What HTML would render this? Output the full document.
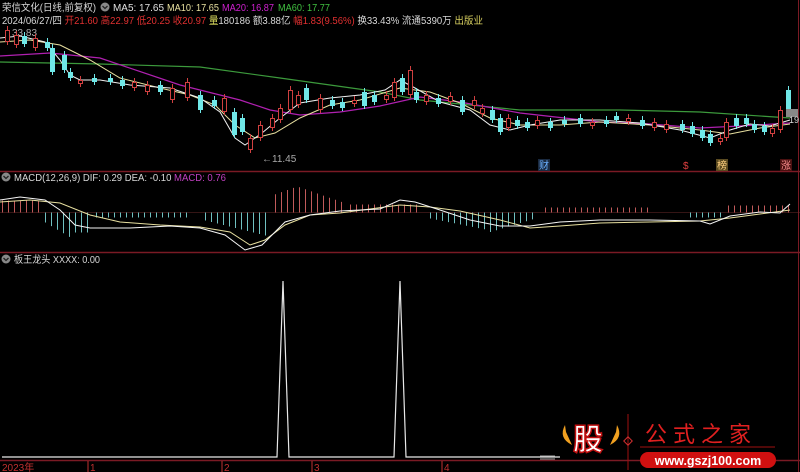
<!DOCTYPE html>
<html><head><meta charset="utf-8">
<style>
html,body{margin:0;padding:0;background:#000;width:800px;height:472px;overflow:hidden}
svg{display:block}
text{font-family:"Liberation Sans","Noto Sans CJK SC",sans-serif}
</style></head><body>
<svg id="s" width="800" height="472" viewBox="0 0 800 472" xmlns="http://www.w3.org/2000/svg">
<rect width="800" height="472" fill="#000"/>
<!-- header -->
<text x="2" y="11" font-size="10" fill="#d8d8d8" textLength="94" lengthAdjust="spacingAndGlyphs">荣信文化(日线,前复权)</text>
<circle cx="105" cy="7" r="4.5" fill="#888"/><path d="M102.5 6 L105 8.5 L107.5 6" stroke="#222" stroke-width="1.3" fill="none"/>
<text x="113" y="11" font-size="10" fill="#e0e0e0" textLength="51" lengthAdjust="spacingAndGlyphs">MA5: 17.65</text>
<text x="167" y="11" font-size="10" fill="#e8e0a0" textLength="52" lengthAdjust="spacingAndGlyphs">MA10: 17.65</text>
<text x="222" y="11" font-size="10" fill="#d020d0" textLength="52" lengthAdjust="spacingAndGlyphs">MA20: 16.87</text>
<text x="278" y="11" font-size="10" fill="#40c040" textLength="52" lengthAdjust="spacingAndGlyphs">MA60: 17.77</text>
<text x="2" y="24" font-size="10" fill="#d8d8d8" textLength="481" lengthAdjust="spacingAndGlyphs">2024/06/27/四 <tspan fill="#e03030">开21.60 高22.97 低20.25 收20.97</tspan> <tspan fill="#e0e060">量</tspan>180186 额3.88亿 <tspan fill="#e03030">幅1.83(9.56%)</tspan> 换33.43% 流通5390万 <tspan fill="#d8d060">出版业</tspan></text>
<text x="12" y="36" font-size="10" fill="#aaa">33.83</text>
<text x="262" y="162" font-size="10" fill="#aaa">←11.45</text>
<!-- separators -->
<line x1="0" y1="171.5" x2="800" y2="171.5" stroke="#7a1a24" stroke-width="1.5"/>
<line x1="0" y1="252.5" x2="800" y2="252.5" stroke="#7a1a24" stroke-width="1.5"/>
<line x1="0" y1="460.5" x2="800" y2="460.5" stroke="#7a1a24" stroke-width="1.5"/>
<line x1="798.5" y1="0" x2="798.5" y2="472" stroke="#7a1a24" stroke-width="1"/>
<!-- MA lines -->
<polyline fill="none" stroke="#3c9a3c" stroke-width="1.2" points="0,62 100,64 200,67 280,78 380,92 420,100 520,110 620,110 700,112 790,118"/>
<polyline fill="none" stroke="#b020b0" stroke-width="1.2" points="0,56 50,53 100,58 180,85 240,100 270,110 300,115 340,112 380,106 420,97 460,102 520,113 600,122 650,124 700,128 740,126 790,123"/>
<polyline fill="none" stroke="#e8e0a0" stroke-width="1" points="0,42 30,40 60,45 90,60 120,78 160,88 190,95 215,105 235,125 255,138 275,133 300,118 330,105 360,100 400,88 430,92 460,103 490,118 520,125 560,125 600,122 650,125 700,130 730,134 760,128 790,124"/>
<polyline fill="none" stroke="#f0f0f0" stroke-width="1" points="0,38 20,36 45,42 60,60 70,75 80,80 100,80 130,85 170,88 200,98 220,112 235,138 245,145 262,133 280,118 300,103 330,98 360,95 385,90 400,80 415,88 440,102 470,110 490,125 510,130 530,125 560,120 600,120 640,123 680,130 710,138 730,130 750,124 770,126 790,120"/>
<g id="candles"></g>
<!-- event labels -->
<rect x="538" y="159" width="12" height="12" fill="#1a2a40"/><text x="539" y="169" font-size="10" fill="#6ab0ff">财</text>
<text x="683" y="169" font-size="10" fill="#e04040">$</text>
<rect x="716" y="159" width="12" height="12" fill="#5a4a20"/><text x="717" y="169" font-size="10" fill="#ffd080">榜</text>
<rect x="780" y="159" width="12" height="12" fill="#4a1010"/><text x="781" y="169" font-size="10" fill="#ff9090">涨</text>
<rect x="786" y="109" width="12" height="8" fill="#888"/><text x="789" y="123" font-size="9" fill="#ddd">19</text>
<!-- MACD -->
<circle cx="6" cy="177" r="4.5" fill="#888"/><path d="M3.5 176 L6 178.5 L8.5 176" stroke="#222" stroke-width="1.3" fill="none"/>
<text x="14" y="181" font-size="10" fill="#d8d8d8" textLength="212" lengthAdjust="spacingAndGlyphs">MACD(12,26,9) DIF: 0.29 DEA: -0.10 <tspan fill="#c040c0">MACD: 0.76</tspan></text>
<line x1="0" y1="212.5" x2="800" y2="212.5" stroke="#6a2a2a" stroke-width="0.6"/>
<g id="hist"></g>
<polyline fill="none" stroke="#e8e0a0" stroke-width="1" points="0,202 30,200 60,203 90,215 120,222 160,225 200,227 230,232 250,245 265,240 285,225 310,215 340,213 370,209 400,205 430,207 460,211 500,220 530,228 560,226 600,223 650,222 700,221 730,218 760,214 790,210"/>
<polyline fill="none" stroke="#f4f4f4" stroke-width="1" points="0,200 20,197 45,200 60,210 75,225 90,228 130,228 170,226 200,228 225,235 245,250 262,245 285,222 310,215 340,211 380,209 400,200 415,202 440,210 470,220 500,226 530,226 560,222 600,220 650,220 700,221 710,224 730,216 760,212 780,213 790,204"/>
<!-- 板王龙头 -->
<circle cx="6" cy="259" r="4.5" fill="#888"/><path d="M3.5 258 L6 260.5 L8.5 258" stroke="#222" stroke-width="1.3" fill="none"/>
<text x="14" y="263" font-size="10" fill="#d8d8d8" textLength="86" lengthAdjust="spacingAndGlyphs">板王龙头 XXXX: 0.00</text>
<polyline fill="none" stroke="#e8e8e8" stroke-width="1.2" points="2,457 277,457 283,281 289,457 394,457 400,281 406,457 560,457"/>
<!-- axis -->
<text x="2" y="471" font-size="10" fill="#c03030">2023年</text>
<g stroke="#c03030" stroke-width="1"><line x1="88" y1="461" x2="88" y2="472"/><line x1="222" y1="461" x2="222" y2="472"/><line x1="312" y1="461" x2="312" y2="472"/><line x1="442" y1="461" x2="442" y2="472"/></g>
<text x="90" y="471" font-size="10" fill="#c03030">1</text>
<text x="224" y="471" font-size="10" fill="#c03030">2</text>
<text x="314" y="471" font-size="10" fill="#c03030">3</text>
<text x="444" y="471" font-size="10" fill="#c03030">4</text>
<!-- watermark -->
<path d="M565 425 Q558 438 572 445 L566 432 Z" fill="#f0a020"/>
<path d="M617 425 Q624 438 610 445 L616 432 Z" fill="#f0a020"/>
<text x="573" y="450" font-size="30" font-weight="bold" fill="#fff" stroke="#c01010" stroke-width="1.5">股</text>
<line x1="628" y1="414" x2="628" y2="470" stroke="#a01010"/>
<rect x="625" y="438" width="6" height="6" transform="rotate(45 628 441)" fill="none" stroke="#d03030"/>
<text x="645" y="442" font-size="22" fill="#e02020" letter-spacing="6">公式之家</text>
<line x1="640" y1="447" x2="775" y2="447" stroke="#a01010"/>
<rect x="640" y="452" width="136" height="16" rx="8" fill="#d01010"/>
<text x="708" y="465" font-size="12.5" font-weight="bold" fill="#fff" text-anchor="middle">www.gszj100.com</text>
<line x1="540" y1="456" x2="555" y2="456" stroke="#aaa"/><line x1="540" y1="459" x2="555" y2="459" stroke="#aaa"/>
</svg>
<script>
var NS="http://www.w3.org/2000/svg";
function el(p,t,a){var e=document.createElementNS(NS,t);for(var k in a)e.setAttribute(k,a[k]);p.appendChild(e);}
var h=document.getElementById("hist");
var segs=[[2,40,function(x){return -12;}],[45,92,function(x){return 10+ (x<70?(x-45)*0.6:10);}],[96,190,function(x){return 5;}],[205,268,function(x){return 8+(x-205)*0.25;}],[275,345,function(x){return -(26-Math.abs(x-297)*0.35);}],[350,420,function(x){return -8;}],[430,535,function(x){return 6+(x<490?(x-430)*0.2:(535-x)*0.3);}],[545,650,function(x){return -5;}],[690,720,function(x){return 5;}],[728,792,function(x){return -7;}]];
segs.forEach(function(s){for(var x=s[0];x<=s[1];x+=6){var v=s[2](x);el(h,"line",{x1:x+.5,x2:x+.5,y1:212.5,y2:212.5+v,stroke:v<0?"#c05a5a":"#70c0c0","stroke-width":1});}});
var c=document.getElementById("candles");
var data=[[5,30,42,0],[14,35,45,0],[22,36,44,1],[33,38,48,0],[45,42,48,1],[50,48,72,1],[62,55,70,1],[68,72,78,1],[78,80,84,0],[92,78,82,1],[108,78,82,1],[120,80,86,1],[132,82,88,0],[145,85,92,0],[158,85,92,1],[170,88,100,0],[185,82,98,0],[198,95,110,1],[212,100,106,1],[222,98,112,0],[232,112,135,1],[240,118,132,1],[248,138,150,0],[258,125,138,0],[270,118,128,0],[278,108,120,0],[288,90,110,0],[296,95,105,0],[304,88,100,1],[318,98,110,0],[330,100,106,1],[340,102,108,1],[352,100,104,0],[362,92,106,1],[372,95,102,1],[384,95,100,0],[392,82,98,0],[400,78,92,1],[408,70,95,0],[414,92,100,1],[424,95,102,0],[436,98,104,1],[448,96,102,0],[460,100,112,1],[472,100,106,0],[480,108,114,0],[490,110,120,1],[498,118,132,1],[506,118,128,0],[515,120,126,1],[525,122,128,1],[535,120,126,0],[548,122,128,1],[562,120,124,1],[578,118,124,1],[590,122,126,0],[604,120,124,1],[614,116,120,1],[626,118,122,0],[640,120,126,1],[652,122,128,0],[664,124,130,0],[680,124,130,1],[690,126,134,1],[700,130,138,1],[708,134,143,1],[718,138,142,0],[724,122,138,0],[734,118,126,1],[744,118,124,1],[752,124,130,1],[762,126,132,1],[770,128,134,0],[778,110,130,0],[786,90,110,1]];
data.forEach(function(d){var col=d[3]?"#70e8e8":"#d04040";el(c,"line",{x1:d[0]+2.5,x2:d[0]+2.5,y1:d[1]-4,y2:d[2]+3,stroke:col,"stroke-width":1});
if(d[3])el(c,"rect",{x:d[0],y:d[1],width:5,height:Math.max(1,d[2]-d[1]),fill:col});
else el(c,"rect",{x:d[0]+.5,y:d[1]+.5,width:4,height:Math.max(1,d[2]-d[1]-1),fill:"#000",stroke:col,"stroke-width":1});});
</script>
</body></html>
